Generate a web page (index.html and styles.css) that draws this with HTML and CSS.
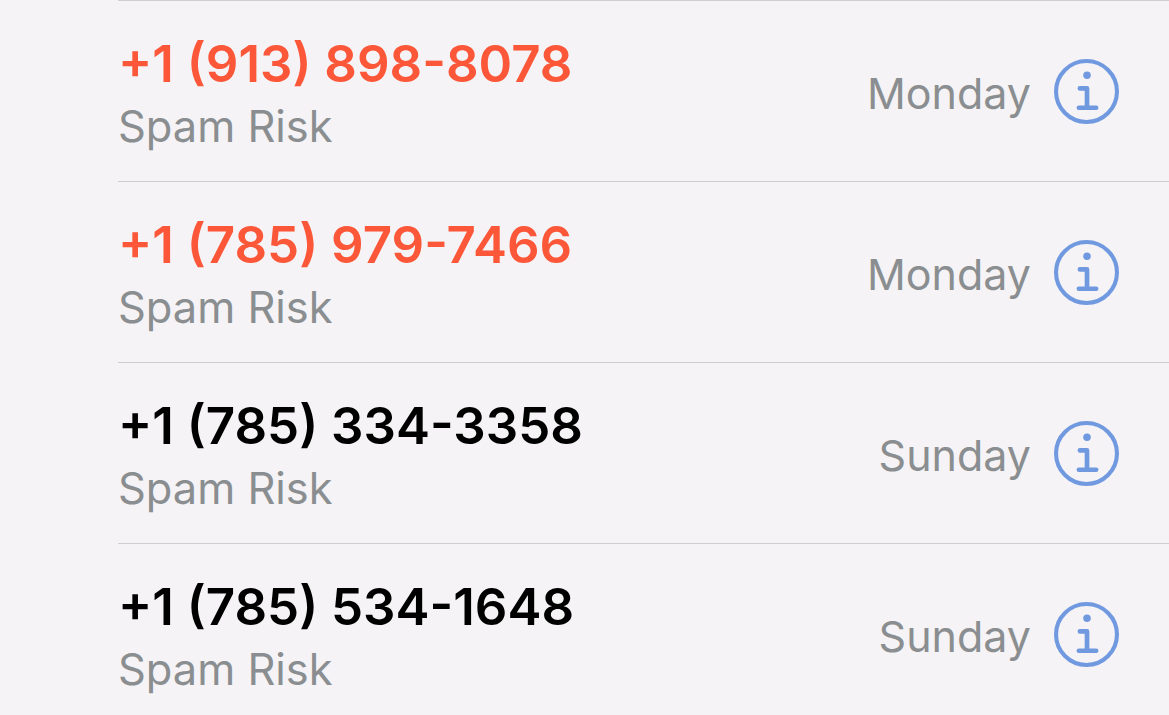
FILE: index.html
```html
<!DOCTYPE html>
<html>

<head>
  <title>Recents</title>
  <link rel="stylesheet" href="styles.css">
</head>

<body>
  <div class="list">
    <div class="call">
      <div class="who">
        <div class="number spam">+1 (913) 898-8078</div>
        <div class="label">Spam Risk</div>
      </div>
      <div class="day">Monday</div>
      <svg class="info" viewBox="0 0 64 64"><circle cx="32" cy="32" r="30" /><circle class="dot" cx="32.500" cy="16" r="3.700" /><path class="stem" d="M25.500 29h7v19M24.500 48h17" /></svg>
    </div>
    <div class="call">
      <div class="who">
        <div class="number spam">+1 (785) 979-7466</div>
        <div class="label">Spam Risk</div>
      </div>
      <div class="day">Monday</div>
      <svg class="info" viewBox="0 0 64 64"><circle cx="32" cy="32" r="30" /><circle class="dot" cx="32.500" cy="16" r="3.700" /><path class="stem" d="M25.500 29h7v19M24.500 48h17" /></svg>
    </div>
    <div class="call">
      <div class="who">
        <div class="number">+1 (785) 334-3358</div>
        <div class="label">Spam Risk</div>
      </div>
      <div class="day">Sunday</div>
      <svg class="info" viewBox="0 0 64 64"><circle cx="32" cy="32" r="30" /><circle class="dot" cx="32.500" cy="16" r="3.700" /><path class="stem" d="M25.500 29h7v19M24.500 48h17" /></svg>
    </div>
    <div class="call">
      <div class="who">
        <div class="number">+1 (785) 534-1648</div>
        <div class="label">Spam Risk</div>
      </div>
      <div class="day">Sunday</div>
      <svg class="info" viewBox="0 0 64 64"><circle cx="32" cy="32" r="30" /><circle class="dot" cx="32.500" cy="16" r="3.700" /><path class="stem" d="M25.500 29h7v19M24.500 48h17" /></svg>
    </div>
  </div>
</body>

</html>
```

FILE: styles.css
```css
html,
body {
  margin: 0;
  height: 715px;
  overflow: hidden;
  background-color: #f5f3f5;
  font-family: "Inter", "Liberation Sans", sans-serif;
}

.list {
  margin-left: 118px;
  border-top: 1px solid #cfcecf;
}

.call {
  display: flex;
  align-items: center;
  height: 180px;
  padding-right: 50px;
  border-bottom: 1px solid #cfcecf;
}

.call:last-child {
  border-bottom: none;
}

.who {
  flex: 1;
  padding-top: 14px;
}

.number {
  font-size: 51px;
  font-weight: 600;
  line-height: 56px;
  color: #000;
}

.number.spam {
  color: #fb5738;
}

.label {
  font-size: 43.4px;
  line-height: 68px;
  color: #8a8e90;
}

.day {
  font-size: 43px;
  color: #8a8e90;
  margin-top: 3px;
  margin-right: 23px;
}

.info {
  width: 65px;
  height: 65px;
  fill: none;
  stroke: #7099e0;
  stroke-width: 4;
}

.info .dot {
  fill: #7099e0;
  stroke: none;
}

.info .stem {
  stroke-width: 4.600;
  stroke-linecap: round;
  stroke-linejoin: round;
}
```
